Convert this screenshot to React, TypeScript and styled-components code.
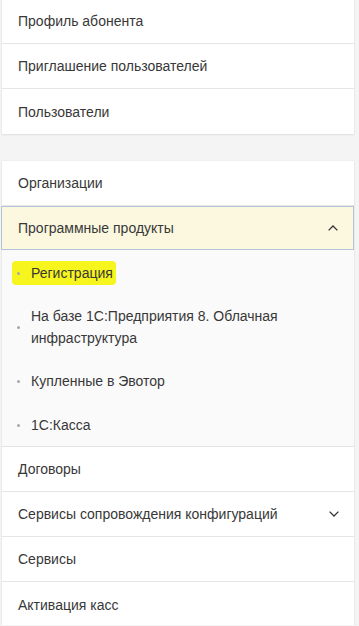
import React from "react";
import styled, { createGlobalStyle } from "styled-components";

const Global = createGlobalStyle`
  html, body { margin: 0; padding: 0; background: #f4f4f4; }
  body { font-family: "Liberation Sans", Arial, sans-serif; color: #333; }
  * { box-sizing: border-box; }
`;

const Page = styled.div`
  width: 359px;
  height: 626px;
  overflow: hidden;
  padding: 0 5px 0 2px;
  display: flex;
  flex-direction: column;
  gap: 27px;
  margin-top: -1px;
`;

const Card = styled.div`
  background: #fff;
  box-shadow: 0 1px 2px rgba(0, 0, 0, 0.08), 0 0 1px rgba(0, 0, 0, 0.1);
  display: flex;
  flex-direction: column;
`;

const Row = styled.div<{ $active?: boolean; $last?: boolean }>`
  height: ${(p) => (p.$active ? 44 : 45)}px;
  padding: 0 15px 0 16px;
  display: flex;
  align-items: center;
  justify-content: space-between;
  font-size: 14px;
  color: #383838;
  border-bottom: ${(p) => (p.$last ? "none" : "1px solid #e6e6e6")};
  ${(p) =>
    p.$active &&
    `
    background: #fcf8e0;
    border: 1px solid #b4c4d4;
    margin: 0 0 0 -1px;
    padding-left: 16px;
  `}
`;

const Sub = styled.div`
  background: #fafafa;
  border-bottom: 1px solid #e2e2e2;
  display: flex;
  flex-direction: column;
`;

const SubItem = styled.div`
  min-height: 44px;
  padding: 11px 16px 9px 15px;
  display: flex;
  align-items: center;
  gap: 11px;
  font-size: 14px;
  line-height: 22px;
  color: #383838;
`;

const Bullet = styled.span`
  width: 3px;
  height: 3px;
  border-radius: 50%;
  background: #a8a8a8;
  flex: none;
`;

const Mark = styled.span`
  background: #f7f51e;
  padding: 1px 3px 1px 5px;
  margin-left: -5px;
  display: inline-flex;
  align-items: center;
  gap: 11px;
  border-radius: 4px;
`;

const Label = styled.span`
  max-width: 270px;
`;

const Chevron = ({ up }: { up?: boolean }) => (
  <svg width="10" height="6" viewBox="0 0 10 6" fill="none">
    <path
      d={up ? "M0.6 5.4 L5 1 L9.4 5.4" : "M0.6 0.6 L5 5 L9.4 0.6"}
      stroke="#333"
      strokeWidth="1.3"
    />
  </svg>
);

export default function App() {
  return (
    <>
      <Global />
      <Page>
        <Card>
          <Row>Профиль абонента</Row>
          <Row>Приглашение пользователей</Row>
          <Row $last>Пользователи</Row>
        </Card>
        <Card>
          <Row>Организации</Row>
          <Row $active>
            Программные продукты
            <Chevron up />
          </Row>
          <Sub>
            <SubItem>
              <Mark>
                <Bullet />
                Регистрация
              </Mark>
            </SubItem>
            <SubItem>
              <Bullet />
              <Label>На базе 1С:Предприятия 8. Облачная инфраструктура</Label>
            </SubItem>
            <SubItem>
              <Bullet />
              Купленные в Эвотор
            </SubItem>
            <SubItem>
              <Bullet />
              1С:Касса
            </SubItem>
          </Sub>
          <Row>Договоры</Row>
          <Row>
            Сервисы сопровождения конфигураций
            <Chevron />
          </Row>
          <Row>Сервисы</Row>
          <Row $last>Активация касс</Row>
        </Card>
      </Page>
    </>
  );
}
